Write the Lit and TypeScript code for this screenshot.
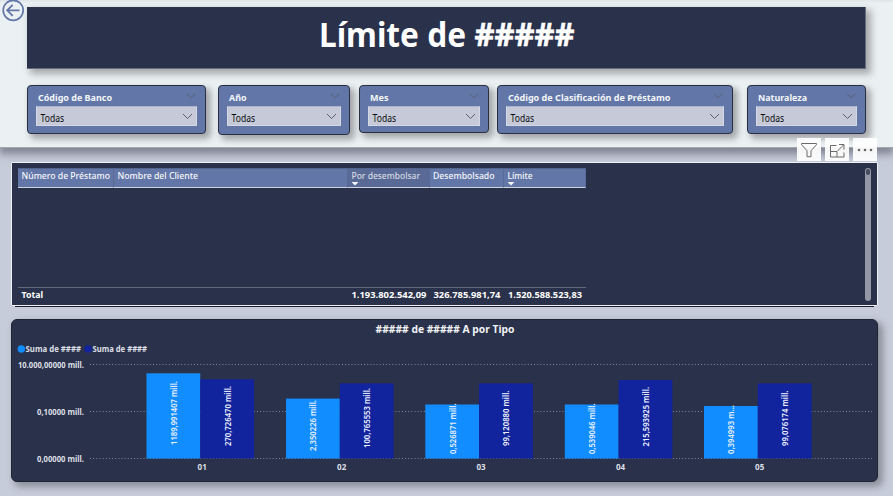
import { LitElement, html, svg, css } from "lit";
import { customElement, property } from "lit/decorators.js";

interface Bar { value: string; top: number; from: number; to: number; }
interface Group { name: string; x: number; a: Bar; b: Bar; }

const GROUPS: Group[] = [
  { name: "01", x: 146.5, a: { value: "1189,991407 mill.", top: 373.3, from: 445, to: 381 }, b: { value: "270,726470 mill.", top: 379.3, from: 446, to: 386 } },
  { name: "02", x: 286, a: { value: "2,350226 mill.", top: 398.6, from: 451, to: 400 }, b: { value: "100,765553 mill.", top: 383.4, from: 448, to: 388 } },
  { name: "03", x: 425.3, a: { value: "0,526871 mill.", top: 404.5, from: 454, to: 403.5 }, b: { value: "99,120880 mill.", top: 383.4, from: 446, to: 390.5 } },
  { name: "04", x: 564.8, a: { value: "0,539046 mill.", top: 404.5, from: 454, to: 403.5 }, b: { value: "215,593925 mill.", top: 380, from: 446.5, to: 387 } },
  { name: "05", x: 704, a: { value: "0,394993 m...", top: 406, from: 454, to: 405 }, b: { value: "99,076174 mill.", top: 383.4, from: 446, to: 390.5 } },
];

const BAR_WIDTH = 53.8;
const BASE = 458.5;

@customElement("slicer-card")
class SlicerCard extends LitElement {
  @property() label = "";
  @property({ type: Number }) textwidth = 50;

  static styles = css`
    :host {
      display: block;
      box-sizing: border-box;
      border: 1px solid #28303f;
      border-radius: 4px;
      background: #6276a8;
      padding: 4px 8px 0;
      box-shadow: 4px 4px 6px 1px rgba(60, 60, 60, 0.4);
      font-family: "Noto Sans", sans-serif;
    }
    .head {
      display: flex;
      justify-content: space-between;
      align-items: center;
      height: 16px;
      padding: 0 1px 0 2px;
    }
    .titlebox { display: block; width: 1px; flex: none; }
    .name { display: block; height: 16px; width: 170px; overflow: visible; }
    .title { fill: #f4f6fa; font: 700 9.6px "Noto Sans", sans-serif; }
    .select {
      display: flex;
      justify-content: space-between;
      align-items: center;
      box-sizing: border-box;
      height: 20px;
      border: 1px solid #d4d8e4;
      border-top-color: #aab3cc;
      background: #c6cad8;
      padding: 0 3px;
    }
    .value { display: block; width: 30px; height: 18px; overflow: visible; }
    .todas { fill: #0c0c10; font: 400 10px "Noto Sans", sans-serif; }
    .chevron { display: block; flex: none; fill: none; stroke: #5b6070; }
    .head .chevron { margin-top: -4px; }
  `;

  render() {
    return html`
      <div class="head">
        <div class="titlebox">
          <svg class="name"><text class="title" x="0" y="10.5" textLength=${this.textwidth} lengthAdjust="spacingAndGlyphs">${this.label}</text></svg>
        </div>
        <svg class="chevron" width="10" height="6"><path d="M1 .8 5 4.8 9 .8" /></svg>
      </div>
      <div class="select">
        <svg class="value"><text class="todas" x="0.6" y="14.5" textLength="23.5" lengthAdjust="spacingAndGlyphs">Todas</text></svg>
        <svg class="chevron" width="11" height="7"><path d="M1 1 5.5 5.5 10 1" /></svg>
      </div>`;
  }
}

@customElement("app-root")
class AppRoot extends LitElement {
  static styles = css`
    :host {
      display: flex;
      flex-direction: column;
      width: 893px;
      height: 496px;
      overflow: hidden;
      position: relative;
      background: #c7ccda;
      font-family: "Noto Sans", sans-serif;
    }
    .top {
      box-sizing: border-box;
      height: 148px;
      flex: none;
      padding: 7px 27px 0;
      background: linear-gradient(#dfe4e7, #ebf0f3 3px);
      border-bottom: 1px solid #a4a7b1;
      box-shadow: 0 5px 8px 1px rgba(80, 82, 96, 0.6);
    }
    .back { position: absolute; left: 1px; top: -2px; fill: none; stroke: #6276a8; }
    .banner {
      box-sizing: border-box;
      width: 839px;
      height: 62px;
      background: #2a314a;
      border-right: 1px solid #666d80;
      border-bottom: 1px solid #666d80;
      box-shadow: 4px 4px 7px 1px rgba(60, 60, 60, 0.4);
    }
    .banner svg { display: block; width: 838px; height: 61px; }
    .headline { fill: #fff; font: 700 33.5px "Noto Sans", sans-serif; }
    .hashes { fill: #fff; stroke: #fff; stroke-width: 0.5; font: 700 31.5px "Noto Sans", sans-serif; }
    .slicers { display: flex; align-items: flex-start; margin-top: 16px; }
    .s1 { width: 179px; height: 49px; margin-right: 12px; }
    .s2 { width: 132px; height: 50px; margin-right: 9px; }
    .s3 { width: 130px; height: 48px; margin-right: 8px; }
    .s4 { width: 236px; height: 49px; margin-right: 14px; }
    .s5 { width: 119px; height: 49px; }
    .actions { position: absolute; left: 797px; top: 138px; display: flex; gap: 4px; z-index: 2; }
    .action { width: 24px; height: 23px; background: rgba(255, 255, 255, 0.92); }
    .action svg { display: block; fill: none; stroke: #6a6a6a; }
    .action .dots { fill: #666; stroke: none; }
    .panel {
      position: relative;
      z-index: 1;
      box-sizing: border-box;
      flex: none;
      width: 867px;
      height: 144px;
      margin: 14px 0 0 11px;
      border: 1px solid #eef0f4;
      border-radius: 1px;
      background: #2a314a;
      padding: 5px 6px 4px;
      display: flex;
      justify-content: space-between;
    }
    .panel::after {
      content: "";
      position: absolute;
      left: 3px;
      right: 3px;
      bottom: -2px;
      height: 1px;
      background: #171b28;
    }
    .table { width: 568px; height: 133px; display: flex; flex-direction: column; }
    .row { display: grid; grid-template-columns: 96px 234px 82px 74px 82px; }
    .th {
      box-sizing: border-box;
      height: 20px;
      background: #6276a8;
      border-top: 1px solid #53648f;
      border-bottom: 1px solid #d0d4e2;
      border-right: 1px solid #586a98;
    }
    .th.sorted { background: #596a97; }
    .th svg { display: block; width: 100%; height: 18px; overflow: visible; }
    .td svg { display: block; width: 100%; height: 13px; overflow: visible; }
    .th text { fill: #f7f8fb; font: 500 9.6px "Noto Sans", sans-serif; }
    .th.sorted text { fill: #d5d9e2; }
    .th path { fill: #f4f5f8; }
    .body { flex: 1; }
    .total { border-top: 1px solid #62687a; }
    .td text { fill: #fff; font: 700 9.6px "Noto Sans", sans-serif; }
    .track { width: 6px; height: 133px; border-radius: 3px; background: #9498a6; box-sizing: border-box; padding: 1px; }
    .thumb { width: 4px; height: 6px; border-radius: 2px; background: #454b5c; }
    .chart {
      box-sizing: border-box;
      flex: none;
      width: 867px;
      height: 163px;
      margin: 13px 0 0 11px;
      border: 1px solid #1d2332;
      border-radius: 6px;
      background: #2a314a;
      box-shadow: 4px 4px 7px 1px rgba(60, 60, 70, 0.42);
    }
    .chart svg { display: block; width: 865px; height: 161px; overflow: visible; }
    .chart text { font-family: "Noto Sans", sans-serif; }
    .ctitle { fill: #f0f1f4; font-size: 10.8px; font-weight: 700; }
    .axis { fill: #dcdfe5; font-size: 7.9px; font-weight: 700; }
    .val { fill: #e9effb; font-size: 8.4px; font-weight: 600; }
    .grid { stroke: #858a99; stroke-width: 1; stroke-dasharray: 1 2.15; }
    .light { fill: #118dff; }
    .dark { fill: #12239e; }
  `;

  private cell(text: string, x: number, y: number, w: number) {
    return svg`<text x=${x} y=${y} textLength=${w} lengthAdjust="spacingAndGlyphs">${text}</text>`;
  }

  private label(bar: Bar, x: number) {
    return svg`<text class="val" transform="translate(${x} ${bar.from}) rotate(-90)" textLength=${bar.from - bar.to} lengthAdjust="spacingAndGlyphs">${bar.value}</text>`;
  }

  private group(g: Group) {
    const mid = g.x + BAR_WIDTH;
    return svg`
      <rect class="light" x=${g.x} y=${g.a.top} width=${BAR_WIDTH} height=${BASE - g.a.top}></rect>
      <rect class="dark" x=${mid} y=${g.b.top} width=${BAR_WIDTH} height=${BASE - g.b.top}></rect>
      ${this.label(g.a, g.x + 30.3)}
      ${this.label(g.b, mid + 30.3)}
      <text class="axis" x=${mid - 2.7} y="470" textLength="9.2" lengthAdjust="spacingAndGlyphs">${g.name}</text>`;
  }

  render() {
    return html`
      <div class="top">
        <div class="banner">
          <svg>
            <text class="headline" x="292" y="40" textLength="147" lengthAdjust="spacingAndGlyphs">Límite de</text>
            <text class="hashes" x="447.500" y="38.500" textLength="100" lengthAdjust="spacingAndGlyphs">#####</text>
          </svg>
        </div>
        <div class="slicers">
          <slicer-card class="s1" label="Código de Banco" .textwidth=${74}></slicer-card>
          <slicer-card class="s2" label="Año" .textwidth=${17.5}></slicer-card>
          <slicer-card class="s3" label="Mes" .textwidth=${18.5}></slicer-card>
          <slicer-card class="s4" label="Código de Clasificación de Préstamo" .textwidth=${162.5}></slicer-card>
          <slicer-card class="s5" label="Naturaleza" .textwidth=${49}></slicer-card>
        </div>
      </div>
      <svg class="back" width="24" height="24">
        <circle cx="12.2" cy="12.3" r="10" stroke-width="1.7" />
        <path d="M18.5 12.3H6.5M11.7 6.8 6.2 12.3l5.5 5.5" stroke-width="1.8" />
      </svg>
      <div class="actions">
        <div class="action"><svg width="24" height="23"><path d="M4.5 5.5h15v1.2l-5.5 6v6h-4v-6l-5.5-6z" /></svg></div>
        <div class="action"><svg width="24" height="23"><path d="M11.500 7.500H5.500v11.500h13.500v-4.500M5.500 13.500h6.500v5.500M12.500 13 18.500 7M14 6.500h5v5" /></svg></div>
        <div class="action"><svg class="dots" width="24" height="23"><circle cx="6" cy="12" r="1.3" /><circle cx="12" cy="12" r="1.3" /><circle cx="18" cy="12" r="1.3" /></svg></div>
      </div>
      <div class="panel">
        <div class="table">
          <div class="row">
            <div class="th"><svg>${this.cell("Número de Préstamo", 3.5, 10, 88.5)}</svg></div>
            <div class="th"><svg>${this.cell("Nombre del Cliente", 3.5, 10, 80.5)}</svg></div>
            <div class="th sorted"><svg>${this.cell("Por desembolsar", 3.5, 10, 68.5)}<path d="M3.500 13h7l-3.500 3.500z" /></svg></div>
            <div class="th"><svg>${this.cell("Desembolsado", 3, 10, 61.5)}</svg></div>
            <div class="th"><svg>${this.cell("Límite", 3.5, 10, 25)}<path d="M3.500 13h7l-3.500 3.500z" /></svg></div>
          </div>
          <div class="body"></div>
          <div class="row total">
            <div class="td"><svg>${this.cell("Total", 3.5, 10, 21.5)}</svg></div>
            <div class="td"></div>
            <div class="td"><svg>${this.cell("1.193.802.542,09", 3.5, 10, 75)}</svg></div>
            <div class="td"><svg>${this.cell("326.785.981,74", 3.5, 10, 67)}</svg></div>
            <div class="td"><svg>${this.cell("1.520.588.523,83", 4, 10, 74)}</svg></div>
          </div>
        </div>
        <div class="track"><div class="thumb"></div></div>
      </div>
      <div class="chart">
        <svg viewBox="12 320 865 161">
          <text class="ctitle" x="375.500" y="333" textLength="139" lengthAdjust="spacingAndGlyphs">##### de ##### A por Tipo</text>
          <circle class="light" cx="21.300" cy="349" r="3.700" />
          <text class="axis" x="25.500" y="352" textLength="55.500" lengthAdjust="spacingAndGlyphs">Suma de ####</text>
          <circle class="dark" cx="88" cy="349" r="3.700" />
          <text class="axis" x="92.500" y="352" textLength="54.500" lengthAdjust="spacingAndGlyphs">Suma de ####</text>
          <text class="axis" x="18" y="368" textLength="66" lengthAdjust="spacingAndGlyphs">10.000,00000 mill.</text>
          <text class="axis" x="37" y="415" textLength="47" lengthAdjust="spacingAndGlyphs">0,10000 mill.</text>
          <text class="axis" x="37" y="462" textLength="47" lengthAdjust="spacingAndGlyphs">0,00000 mill.</text>
          <path class="grid" d="M90 364.500H872M90 411.500H872M90 458.500H872" />
          ${GROUPS.map((g) => this.group(g))}
        </svg>
      </div>`;
  }
}
